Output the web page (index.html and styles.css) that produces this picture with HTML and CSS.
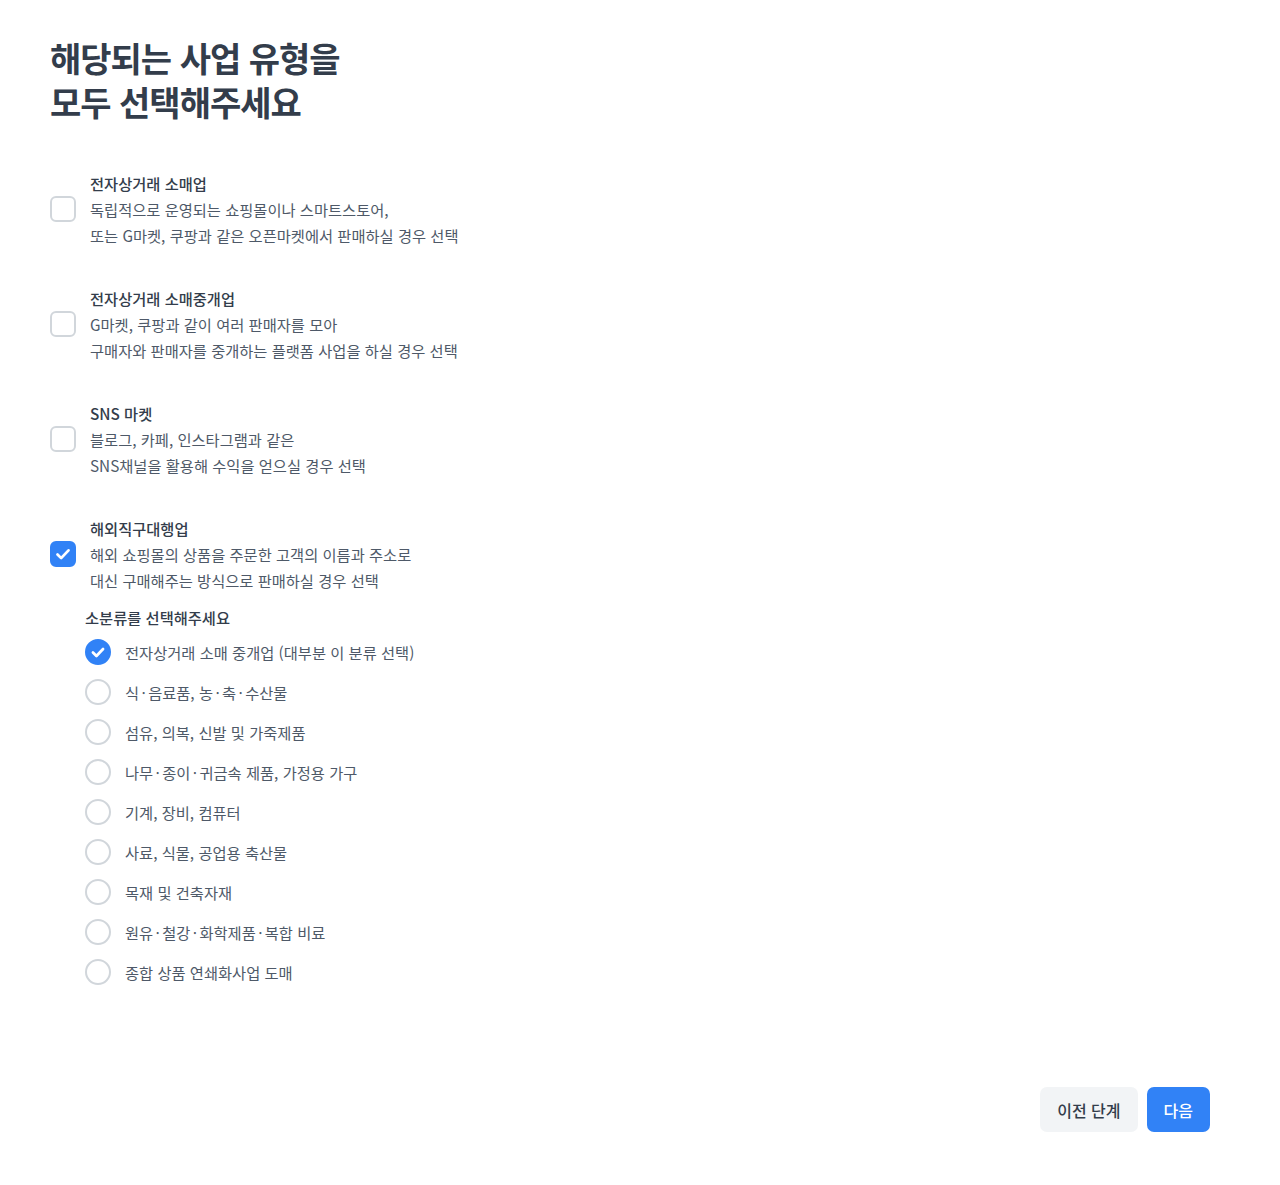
FILE: index.html
```html
<!DOCTYPE html>
<html lang="ko">
<head>
    <meta charset="UTF-8">
    <title>사업 유형 선택</title>
    <link rel="stylesheet" href="styles.css">
</head>
<body>
<div class="page">
    <h1 class="title">해당되는 사업 유형을<br>모두 선택해주세요</h1>

    <ul class="types">
        <li class="type">
            <span class="check"></span>
            <div class="type-text">
                <p class="type-name">전자상거래 소매업</p>
                <p class="type-desc">독립적으로 운영되는 쇼핑몰이나 스마트스토어,<br>또는 G마켓, 쿠팡과 같은 오픈마켓에서 판매하실 경우 선택</p>
            </div>
        </li>
        <li class="type">
            <span class="check"></span>
            <div class="type-text">
                <p class="type-name">전자상거래 소매중개업</p>
                <p class="type-desc">G마켓, 쿠팡과 같이 여러 판매자를 모아<br>구매자와 판매자를 중개하는 플랫폼 사업을 하실 경우 선택</p>
            </div>
        </li>
        <li class="type">
            <span class="check"></span>
            <div class="type-text">
                <p class="type-name">SNS 마켓</p>
                <p class="type-desc">블로그, 카페, 인스타그램과 같은<br>SNS채널을 활용해 수익을 얻으실 경우 선택</p>
            </div>
        </li>
        <li class="type">
            <span class="check on">
                <svg viewBox="0 0 24 24"><path d="M6 12.5l4 4 8-8.5"/></svg>
            </span>
            <div class="type-text">
                <p class="type-name">해외직구대행업</p>
                <p class="type-desc">해외 쇼핑몰의 상품을 주문한 고객의 이름과 주소로<br>대신 구매해주는 방식으로 판매하실 경우 선택</p>
            </div>
        </li>
    </ul>

    <div class="sub">
        <p class="sub-title">소분류를 선택해주세요</p>
        <ul class="sub-list">
            <li class="sub-item">
                <span class="radio on">
                    <svg viewBox="0 0 24 24"><path d="M6.5 12.5l3.8 3.8 7.2-7.6"/></svg>
                </span>
                <span>전자상거래 소매 중개업 (대부분 이 분류 선택)</span>
            </li>
            <li class="sub-item"><span class="radio"></span><span>식<i class="dot">·</i>음료품, 농<i class="dot">·</i>축<i class="dot">·</i>수산물</span></li>
            <li class="sub-item"><span class="radio"></span><span>섬유, 의복, 신발 및 가죽제품</span></li>
            <li class="sub-item"><span class="radio"></span><span>나무<i class="dot">·</i>종이<i class="dot">·</i>귀금속 제품, 가정용 가구</span></li>
            <li class="sub-item"><span class="radio"></span><span>기계, 장비, 컴퓨터</span></li>
            <li class="sub-item"><span class="radio"></span><span>사료, 식물, 공업용 축산물</span></li>
            <li class="sub-item"><span class="radio"></span><span>목재 및 건축자재</span></li>
            <li class="sub-item"><span class="radio"></span><span>원유<i class="dot">·</i>철강<i class="dot">·</i>화학제품<i class="dot">·</i>복합 비료</span></li>
            <li class="sub-item"><span class="radio"></span><span>종합 상품 연쇄화사업 도매</span></li>
        </ul>
    </div>

    <div class="footer">
        <button class="btn btn-prev">이전 단계</button>
        <button class="btn btn-next">다음</button>
    </div>
</div>
</body>
</html>
```

FILE: styles.css
```css
*{
    margin: 0;
    padding: 0;
    box-sizing: border-box;
}
body{
    font-family: "Noto Sans CJK KR", "Noto Sans", sans-serif;
    color: #333d4b;
    background: #fff;
}
ul{
    list-style: none;
}

.page{
    padding: 36px 70px 0 50px;
}
.title{
    font-size: 34px;
    line-height: 44px;
    font-weight: 700;
    color: #333d4b;
    letter-spacing: -1px;
}

/* 사업 유형 */
.types{
    margin-top: 46px;
    display: flex;
    flex-direction: column;
    gap: 37px;
}
.type{
    display: flex;
    align-items: center;
    gap: 14px;
}
.type-name{
    font-size: 15.3px;
    line-height: 26px;
    font-weight: 500;
    color: #333d4b;
}
.type-desc{
    font-size: 15.3px;
    line-height: 26px;
    color: #4e5968;
}
.check{
    width: 26px;
    height: 26px;
    flex: none;
    border: 2px solid #d1d6db;
    border-radius: 6px;
    display: flex;
    align-items: center;
    justify-content: center;
}
.check.on{
    background: #3182f6;
    border-color: #3182f6;
}
.check svg,
.radio svg{
    width: 22px;
    height: 22px;
    fill: none;
    stroke: #fff;
    stroke-width: 3;
    stroke-linecap: round;
    stroke-linejoin: round;
}

/* 소분류 */
.sub{
    margin-top: 11px;
    padding-left: 35px;
}
.sub-title{
    font-size: 15.3px;
    line-height: 26px;
    font-weight: 500;
    color: #333d4b;
}
.sub-list{
    margin-top: 2px;
}
.sub-item{
    height: 40px;
    display: flex;
    align-items: center;
    gap: 14px;
    font-size: 15.3px;
    color: #4e5968;
}
.dot{
    font-style: normal;
    margin: 0 2.4px;
}
.radio{
    width: 26px;
    height: 26px;
    flex: none;
    border: 2px solid #d1d6db;
    border-radius: 50%;
    display: flex;
    align-items: center;
    justify-content: center;
}
.radio.on{
    background: #3182f6;
    border-color: #3182f6;
}

/* 하단 버튼 */
.footer{
    margin-top: 95px;
    display: flex;
    justify-content: flex-end;
    gap: 9px;
}
.btn{
    height: 45px;
    border: none;
    border-radius: 7px;
    font-family: inherit;
    font-size: 16px;
    font-weight: 500;
    padding: 0 17px;
    cursor: pointer;
}
.btn-prev{
    background: #f2f4f6;
    color: #333d4b;
}
.btn-next{
    background: #3182f6;
    color: #fff;
}
```
